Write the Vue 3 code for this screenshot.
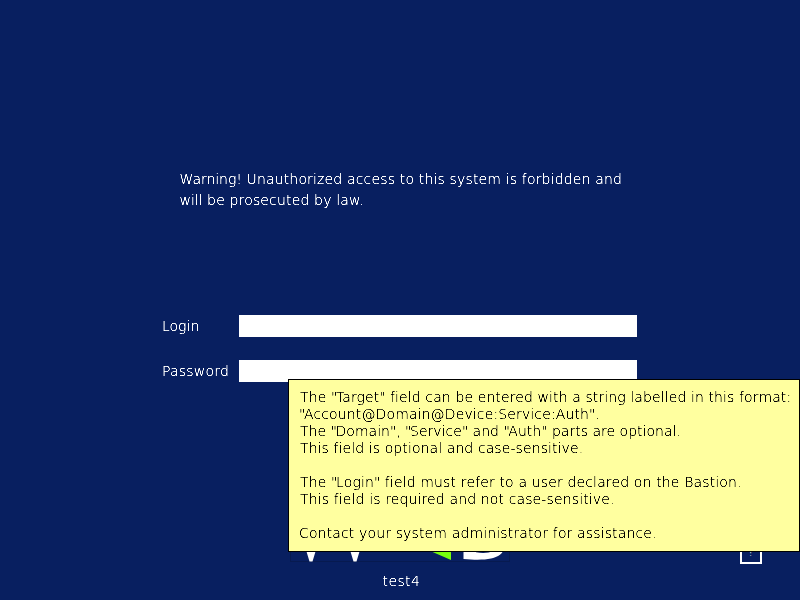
<script setup>
const notice = [
  { lead: 'Warning!', rest: ' Unauthorized access to this system is forbidden and' },
  { lead: 'will', rest: ' be prosecuted by law.' },
]
// Each hint carries its own tracking, in pixels.
const hints = [
  ['The "Target" field can be entered with a string labelled in this format:', 0.107],
  ['"Account@Domain@Device:Service:Auth".', 0.13],
  ['The "Domain", "Service" and "Auth" parts are optional.', 0.02],
  ['This field is optional and case-sensitive.', 0.095],
  ['', 0],
  ['The "Login" field must refer to a user declared on the Bastion.', 0.146],
  ['This field is required and not case-sensitive.', 0.13],
  ['', 0],
  ['Contact your system administrator for assistance.', 0.14],
].map(([text, tracking]) => ({ parts: text.split(/("(?=[A-Z])|")/).filter(Boolean), tracking, outdent: /^["C]/.test(text) }))

const isOpening = (parts, j) => parts[j] === '"' && /^[A-Z]/.test(parts[j + 1] ?? '')
const isClosing = (parts, j) => parts[j] === '"' && !isOpening(parts, j)
</script>

<template>
  <main class="screen">
    <svg class="defs" width="0" height="0" aria-hidden="true">
      <filter id="crisp" x="-5%" y="-20%" width="110%" height="140%" color-interpolation-filters="sRGB">
        <feComponentTransfer><feFuncA type="linear" slope="2.2" intercept="-0.35" /></feComponentTransfer>
      </filter>
    </svg>
    <div class="notice">
      <p v-for="line in notice" :key="line.lead"><span class="lead">{{ line.lead }}</span>{{ line.rest }}</p>
    </div>
    <form class="form">
      <label class="row"><span class="label">Login</span><input class="field" type="text" /></label>
      <label class="row"><span class="label wide">Password</span><input class="field" type="password" /></label>
    </form>
    <div class="footer">
      <svg class="logo" width="220" height="22" viewBox="290 540 220 22">
        <rect x="290.5" y="530.5" width="219" height="31" fill="none" stroke="#071a50" />
        <path d="M303 540 L309.500 561.500 H312.500 L319 540Z M347 540 L353.500 561.500 H356.500 L363 540Z" fill="#fff" />
        <path d="M405 540 H451 V560Z" fill="#76ff0d" />
        <path d="M463.500 540 V559 C475 560 484 560 491 558.500 C497 557 501 555 503 551 V540Z" fill="#fff" />
        <path d="M476 540 V552.300 C483 553.400 489 553 493 551 V540Z" fill="#081f60" />
      </svg>
      <div class="help">?</div>
    </div>
    <p class="target">test4</p>
    <div class="tooltip">
      <p v-for="(line, i) in hints" :key="i" :class="{ outdent: line.outdent }" :style="{ letterSpacing: line.tracking + 'px' }"><span v-for="(part, j) in line.parts" :key="j" :class="{ opening: isOpening(line.parts, j), closing: isClosing(line.parts, j) }">{{ part }}</span></p>
    </div>
  </main>
</template>

<style>
body { margin: 0; background: #081f60; }
</style>

<style scoped>
.screen {
  position: relative;
  box-sizing: border-box;
  width: 800px;
  height: 600px;
  padding-top: 169px;
  overflow: hidden;
  background: #081f60;
  color: #fff;
  font: 200 14px "DejaVu Sans Light", "DejaVu Sans", sans-serif;
}
.defs { position: absolute; }
p { margin: 0; white-space: pre; }
p, .label { filter: url(#crisp); }
.notice { height: 146px; padding-left: 179.5px; line-height: 21px; letter-spacing: 0.16px; }
.lead { letter-spacing: -0.04px; }
.form { display: flex; flex-direction: column; gap: 23px; padding-left: 162px; }
.row { display: flex; height: 22px; line-height: 22px; }
.label { width: 77px; }
.wide { letter-spacing: 0.22px; }
.field { box-sizing: border-box; width: 398px; height: 22px; padding: 0 4px; border: 0; background: #fff; outline: 0; }
.footer { display: flex; height: 24px; margin-top: 158px; padding-left: 290px; }
.logo { display: block; }
.help {
  box-sizing: border-box;
  width: 22px;
  height: 24px;
  margin-left: 230px;
  border: 2px solid #fff;
  line-height: 19px;
  text-align: center;
}
.target { padding-left: 382.5px; margin-top: 8px; line-height: 18px; letter-spacing: 0.4px; }
.tooltip {
  position: absolute;
  left: 288px;
  top: 379px;
  box-sizing: border-box;
  width: 512px;
  height: 173px;
  padding: 9px 11px;
  border: 1px solid #000;
  background: #ffff9f;
  color: #000;
}
.tooltip p { height: 17px; line-height: 17px; }
.tooltip .outdent { margin-left: -1px; }
.opening { letter-spacing: -1.5px; }
.closing { letter-spacing: -0.3px; }
</style>
